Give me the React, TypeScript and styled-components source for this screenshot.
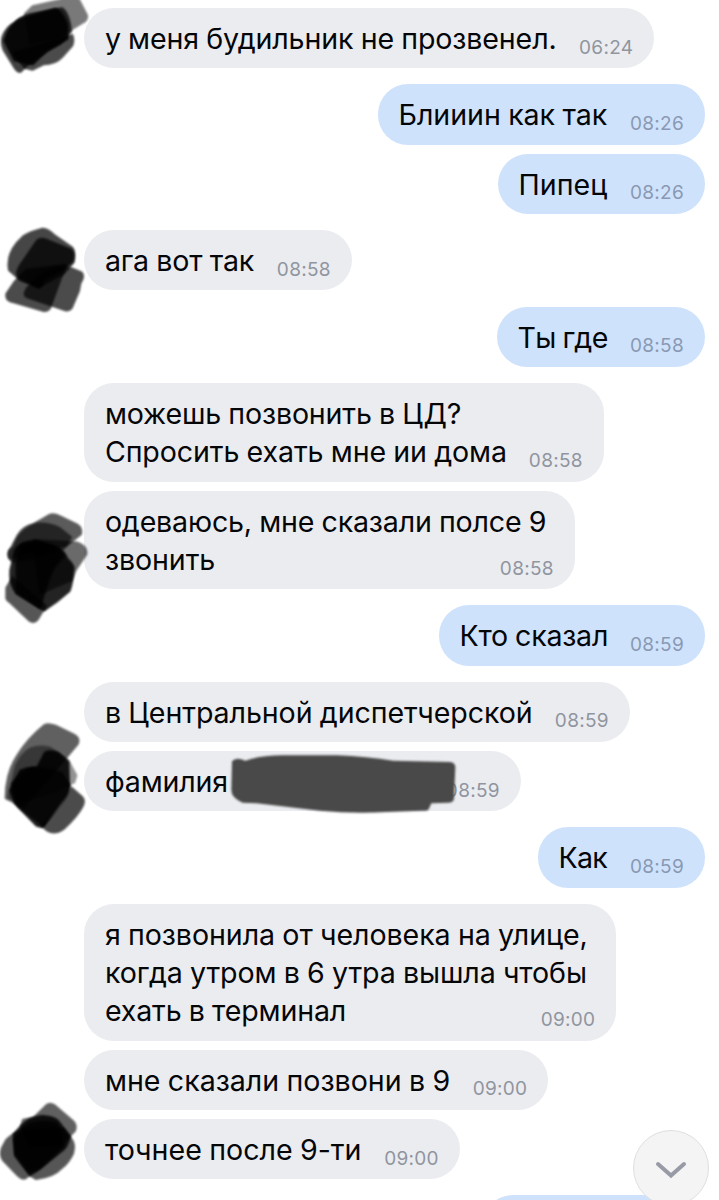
import React from "react";
import styled, { createGlobalStyle } from "styled-components";

const GlobalStyle = createGlobalStyle`
  html, body { margin: 0; background: #fff; overflow: hidden; }
`;

const Chat = styled.main`
  position: relative;
  box-sizing: border-box;
  width: 719px;
  height: 1200px;
  padding: 8.1px 14px 0 0;
  overflow: hidden;
  background: #fff;
  color: #050608;
  font-family: Inter, "Liberation Sans", sans-serif;
`;

const Row = styled.div<{ $own?: boolean; $gap: number }>`
  display: flex;
  justify-content: ${(p) => (p.$own ? "flex-end" : "flex-start")};
  margin-bottom: ${(p) => p.$gap}px;
`;

const AvatarCell = styled.div`
  position: relative;
  flex: 0 0 84.4px;
`;

const Scribble = styled.svg<{ $top: number }>`
  position: absolute;
  left: 0;
  top: ${(p) => p.$top}px;
  width: 90px;
  height: 130px;
  overflow: visible;
  z-index: 1;
`;

const Bubble = styled.div<{ $own?: boolean; $width: number }>`
  position: relative;
  box-sizing: border-box;
  display: flex;
  justify-content: space-between;
  align-items: flex-end;
  width: ${(p) => p.$width}px;
  min-height: 60.3px;
  padding: 12px 21px 10px 20.5px;
  border-radius: 30px;
  background: ${(p) => (p.$own ? "#cfe2fc" : "#ebecf0")};
`;

const Lines = styled.div`
  display: flex;
  flex: 1 1 0;
  min-width: 0;
  flex-direction: column;
`;

const Line = styled.span<{ $tracking: number }>`
  font-size: 28.6px;
  line-height: 38.3px;
  letter-spacing: ${(p) => p.$tracking}px;
  word-spacing: -0.6px;
  white-space: nowrap;
`;

const Time = styled.time<{ $own?: boolean }>`
  flex: none;
  font-size: 19px;
  line-height: 24px;
  margin-bottom: -1.4px;
  letter-spacing: 0.3px;
  white-space: nowrap;
  color: ${(p) => (p.$own ? "#8999b3" : "#90959f")};
`;

const Redaction = styled.svg`
  position: absolute;
  left: 135.5px;
  top: -11px;
  width: 310px;
  height: 80px;
`;

const ScrollButton = styled.button`
  position: absolute;
  left: 633px;
  top: 1130px;
  width: 76px;
  height: 76px;
  padding: 3px 0 0;
  display: flex;
  align-items: center;
  justify-content: center;
  border: 1px solid #dedfe1;
  border-radius: 50%;
  background: #f4f4f5;
  z-index: 2;
`;

type Stroke = { d: string; o: number };
type Blob = { top: number; strokes: Stroke[] };

const blobs: Record<string, Blob> = {
  a: {
    top: -8,
    strokes: [
      { d: "M76 42L98 20L185 0L190 -12L230 -12L260 46Q262 60 246 68L180 108L90 130Z", o: 0.52 },
      { d: "M8 112Q20 80 44 70Q66 50 90 44L186 26Q206 40 212 94L180 130Q90 180 62 214Q54 218 44 202L12 150Q4 130 8 112Z", o: 0.74 },
      { d: "M24 96Q46 60 72 54L166 28Q182 30 200 72L202 116Q160 140 140 150Q120 170 98 192L44 180L14 122Z", o: 0.88 },
      { d: "M44 160L216 106Q222 120 216 136L186 170Q166 192 130 192L98 208L74 202Z", o: 0.7 },
    ],
  },
  b: {
    top: -10.2,
    strokes: [
      { d: "M70 50Q90 36 128 27Q144 28 162 46L214 82Q226 92 220 126L190 160L116 200L62 180L28 150Q18 96 70 50Z", o: 0.72 },
      { d: "M112 62Q124 52 144 62L212 90Q224 100 216 124Q190 150 130 176Q128 196 116 202L58 172Q46 162 60 138Z", o: 0.76 },
      { d: "M46 184Q70 160 80 150L196 136L152 256Q148 272 132 272L34 244Q18 240 20 222Z", o: 0.7 },
      { d: "M134 160Q170 140 210 144L244 158Q254 168 240 190L236 212L214 264Q206 274 190 268L80 230Q68 222 86 200Z", o: 0.7 },
    ],
  },
  c: {
    top: 9.4,
    strokes: [
      { d: "M54 106Q70 80 100 74L148 46Q160 40 180 50L230 74Q246 84 242 102L200 136Q90 150 40 172Q26 184 26 160Z", o: 0.64 },
      { d: "M42 142Q58 88 112 72Q150 70 180 86L212 112L190 146L100 174L40 184Q24 176 28 152Z", o: 0.6 },
      { d: "M100 122L226 128Q260 136 258 162L226 210L214 240L120 280Z", o: 0.58 },
      { d: "M46 152Q62 122 110 124L168 142Q190 150 202 178Q226 200 218 214Q216 250 208 272Q170 306 132 330L50 280Q28 250 32 210Z", o: 0.86 },
      { d: "M20 264L38 234L136 318L112 358Q104 370 90 362L28 304Q18 298 20 288Z", o: 0.66 },
      { d: "M64 138Q100 124 150 138Q184 150 190 170Q160 196 150 226Q130 280 120 322L52 276L50 190Z", o: 0.8 },
    ],
  },
  d: {
    top: -41,
    strokes: [
      { d: "M52 138Q84 86 134 46Q144 40 166 48L220 74Q240 84 232 102L168 178L70 290L18 264Q18 190 52 138Z", o: 0.62 },
      { d: "M48 168Q66 130 92 116Q120 106 150 114L204 152L228 196L222 216L160 246L60 276L26 262Z", o: 0.42 },
      { d: "M62 182Q84 172 112 174L136 128Q152 120 174 130L204 156L206 226Q204 250 186 270L130 346Q122 352 110 346L46 280L32 242Z", o: 0.88 },
      { d: "M38 222Q60 190 96 176Q140 176 184 190L208 228Q204 250 190 270L130 346L56 288Z", o: 0.75 },
      { d: "M214 234L244 260Q256 270 246 290Q230 320 190 356Q164 374 144 362L126 348Q190 290 214 234Z", o: 0.7 },
    ],
  },
  e: {
    top: -29,
    strokes: [
      { d: "M70 90L102 84L140 46Q150 38 162 46L218 94Q230 104 224 122L180 166L90 170L64 110Z", o: 0.62 },
      { d: "M20 150Q40 130 70 120L190 118L212 146Q226 162 218 190Q206 216 186 232Q160 260 108 266L88 254L76 264Q66 268 54 256L10 210Q0 196 6 176Z", o: 0.66 },
      { d: "M42 134Q70 100 88 90Q120 76 136 80Q166 84 174 94L208 140Q202 166 190 178L110 242L90 254L46 196Z", o: 0.86 },
      { d: "M44 148Q60 120 92 102Q140 90 168 102Q190 130 188 168L120 232L88 246L48 190Z", o: 0.76 },
    ],
  },
};

const Avatar = ({ id }: { id: string }) => (
  <Scribble $top={blobs[id].top} viewBox="0 0 270 390" aria-hidden>
    <defs>
      <filter id={`soft-${id}`} x="-15%" y="-15%" width="130%" height="130%">
        <feGaussianBlur stdDeviation="3.8" />
      </filter>
    </defs>
    {blobs[id].strokes.map((s, i) => (
      <path
        key={i}
        d={s.d}
        fill="#000"
        stroke="#000"
        strokeWidth="8"
        strokeLinejoin="round"
        opacity={s.o}
        filter={`url(#soft-${id})`}
      />
    ))}
  </Scribble>
);

type Message = {
  own?: boolean;
  lines: [string, number][];
  time?: string;
  width: number;
  gap: number;
  avatar?: string;
  redacted?: boolean;
};

const messages: Message[] = [
  { lines: [["у меня будильник не прозвенел.", -0.14]], time: "06:24", width: 570, gap: 16.1, avatar: "a" },
  { own: true, lines: [["Блииин как так", -0.05]], time: "08:26", width: 327, gap: 9 },
  { own: true, lines: [["Пипец", 0]], time: "08:26", width: 207, gap: 16.1 },
  { lines: [["ага вот так", -0.15]], time: "08:58", width: 267.5, gap: 16.1, avatar: "b" },
  { own: true, lines: [["Ты где", -0.65]], time: "08:58", width: 208, gap: 16.1 },
  { lines: [["можешь позвонить в ЦД?", -0.17], ["Спросить ехать мне ии дома", -0.12]], time: "08:58", width: 519.5, gap: 9 },
  { lines: [["одеваюсь, мне сказали полсе 9", -0.18], ["звонить", -0.1]], time: "08:58", width: 490.5, gap: 16.1, avatar: "c" },
  { own: true, lines: [["Кто сказал", -0.26]], time: "08:59", width: 266, gap: 16.1 },
  { lines: [["в Центральной диспетчерской", -0.09]], time: "08:59", width: 545.5, gap: 9 },
  { lines: [["фамилия", -0.15]], time: "08:59", width: 436.5, gap: 16.1, avatar: "d", redacted: true },
  { own: true, lines: [["Как", -0.7]], time: "08:59", width: 167, gap: 16.1 },
  {
    lines: [
      ["я позвонила от человека на улице,", -0.08],
      ["когда утром в 6 утра вышла чтобы", -0.12],
      ["ехать в терминал", -0.16],
    ],
    time: "09:00", width: 532, gap: 9,
  },
  { lines: [["мне сказали позвони в 9", -0.02]], time: "09:00", width: 464, gap: 9 },
  { lines: [["точнее после 9-ти", -0.02]], time: "09:00", width: 375.5, gap: 16.1, avatar: "e" },
  { own: true, lines: [], width: 222, gap: 0 },
];

export default function App() {
  return (
    <>
      <GlobalStyle />
      <Chat>
        {messages.map((m, i) => (
          <Row key={i} $own={m.own} $gap={m.gap}>
            {!m.own && <AvatarCell>{m.avatar && <Avatar id={m.avatar} />}</AvatarCell>}
            <Bubble $own={m.own} $width={m.width}>
              <Lines>
                {m.lines.map(([text, tracking]) => (
                  <Line key={text} $tracking={tracking}>{text}</Line>
                ))}
              </Lines>
              {m.time && <Time $own={m.own}>{m.time}</Time>}
              {m.redacted && (
                <Redaction viewBox="0 0 930 240" aria-hidden>
                  <defs>
                    <filter id="edge" x="-5%" y="-10%" width="110%" height="120%">
                      <feGaussianBlur stdDeviation="2.5" />
                    </filter>
                  </defs>
                  <path
                    filter="url(#edge)"
                    fill="#484848"
                    d="M36 64Q48 50 76 62Q120 46 190 46L350 46Q440 50 520 62L690 66Q706 68 706 82L702 176Q700 188 684 188L634 190L626 208Q622 214 606 212L500 216Q400 222 300 212L110 190L68 188Q34 174 34 150Z"
                  />
                </Redaction>
              )}
            </Bubble>
          </Row>
        ))}
        <ScrollButton aria-label="Вниз">
          <svg width="36" height="24" viewBox="0 0 36 24" fill="none">
            <path d="M5 6L18 17.5L31 6" stroke="#989ba5" strokeWidth="4" strokeLinecap="round" strokeLinejoin="miter" />
          </svg>
        </ScrollButton>
      </Chat>
    </>
  );
}
